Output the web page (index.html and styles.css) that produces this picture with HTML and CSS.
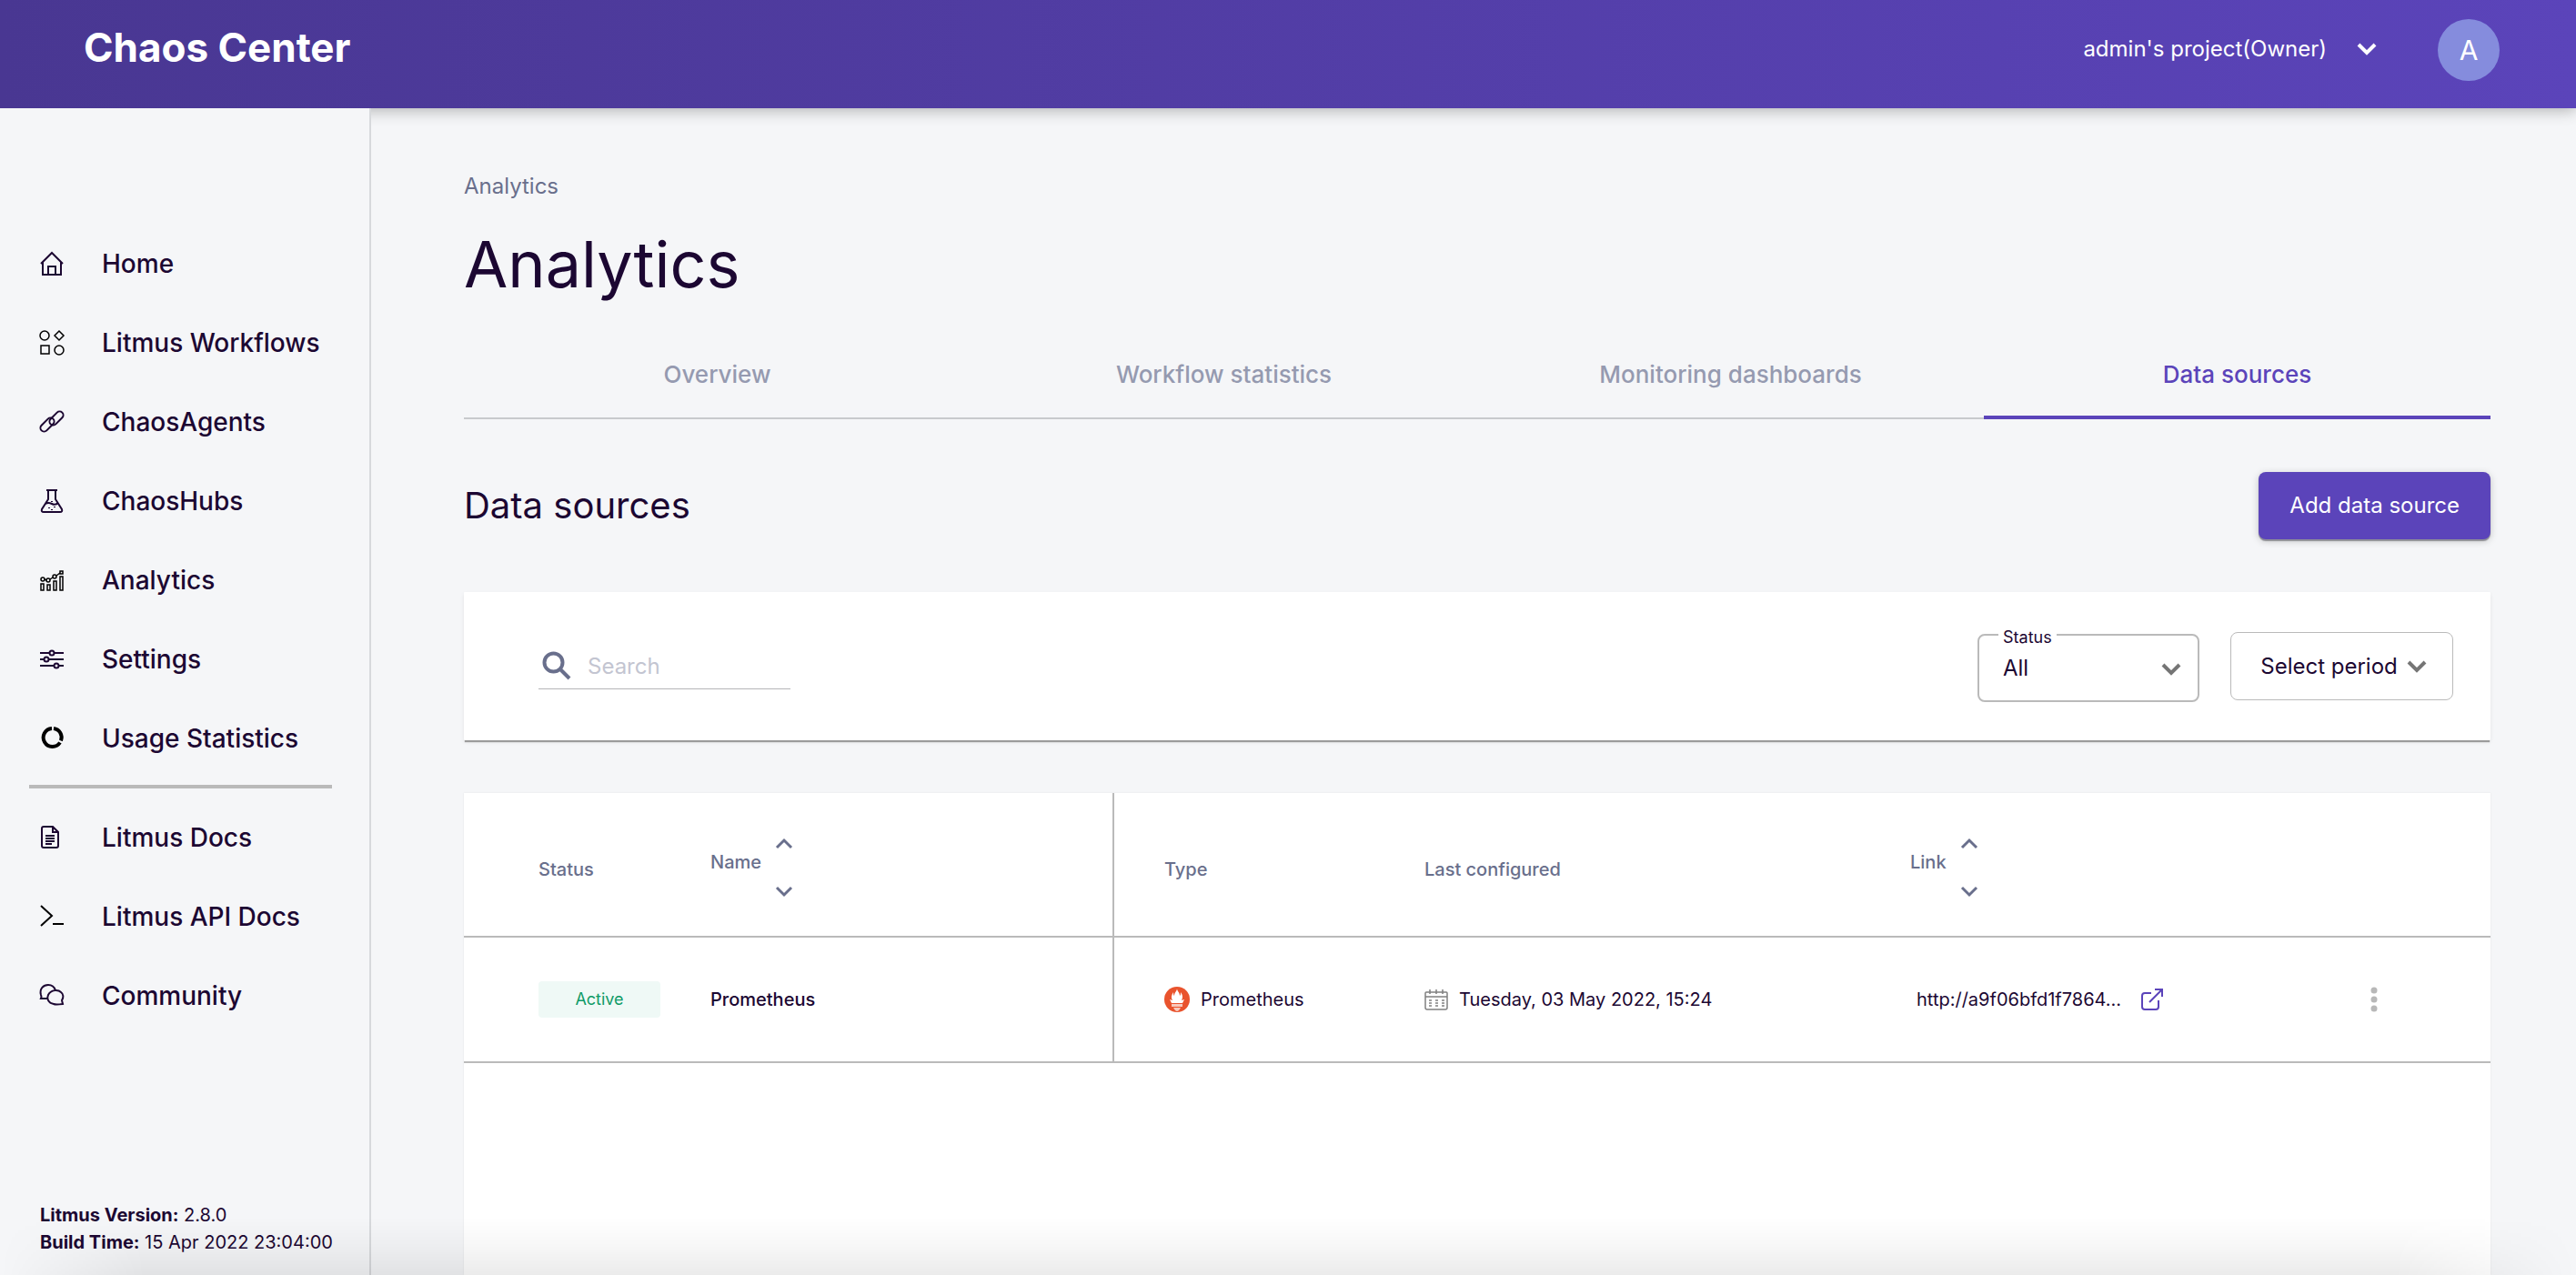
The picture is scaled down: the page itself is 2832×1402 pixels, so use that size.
FILE: index.html
```html
<!DOCTYPE html>
<html lang="en">
<head>
  <meta charset="utf-8">
  <title>Chaos Center - Analytics</title>
  <link rel="stylesheet" href="styles.css">
</head>
<body>
  <header class="topbar">
    <a class="brand" href="#">Chaos Center</a>
    <div class="account">
      <button class="project" type="button">
        <span>admin's project(Owner)</span>
        <svg class="chevron-light" viewBox="0 0 20 12" width="20" height="12"><path d="M1 1l9 9 9-9"/></svg>
      </button>
      <button class="avatar" type="button">A</button>
    </div>
  </header>

  <div class="shell">
    <aside class="sidebar">
      <nav>
        <ul class="menu">
          <li><a href="#">
            <svg class="icon" viewBox="0 0 26 26"><path d="M1 13L13 1l12 12M3 11v14h20V11M9 25v-9h8v9"/></svg>
            <span>Home</span></a></li>
          <li><a href="#">
            <svg class="icon icon-black" viewBox="0 0 26 26"><circle cx="5" cy="5" r="5"/><path d="M21 0l5 5-5 5-5-5zM1 16h9v9H1z"/><circle cx="21" cy="21" r="5"/></svg>
            <span>Litmus Workflows</span></a></li>
          <li><a href="#">
            <svg class="icon" viewBox="0 0 26 26"><rect x="-9" y="-4" width="18" height="8" rx="4" transform="translate(8 16) rotate(-45)"/><rect x="-9" y="-4" width="18" height="8" rx="4" transform="translate(18 9) rotate(-45)"/></svg>
            <span>ChaosAgents</span></a></li>
          <li><a href="#">
            <svg class="icon" viewBox="0 0 26 26"><path d="M7 1h12M9 1v10L2 22q-1 3 2 3h18q3 0 2-3L17 11V1M6 16q3-2 7 0t7-1"/><path d="M13 13v1M10 20v1M16 19v1M13 22v1"/></svg>
            <span>ChaosHubs</span></a></li>
          <li><a href="#">
            <svg class="icon icon-black" viewBox="0 0 26 26"><path d="M1 17h3v7H1zM8 18h3v6H8zM15 14h3v10h-3zM22 9h3v15h-3zM5 12l2 1M11 12l3-2M18 8l4-3"/><circle cx="3" cy="12" r="2"/><circle cx="9" cy="13" r="2"/><circle cx="16" cy="9" r="2"/><path d="M22 3h3v3h-3z"/></svg>
            <span>Analytics</span></a></li>
          <li><a href="#">
            <svg class="icon" viewBox="0 0 26 26"><path d="M0 6h10.500M15.500 6H26M0 13h4.500M9.500 13H26M0 20h15.500M20.500 20H26"/><circle cx="13" cy="6" r="2.500"/><circle cx="7" cy="13" r="2.500"/><circle cx="18" cy="20" r="2.500"/></svg>
            <span>Settings</span></a></li>
          <li><a href="#">
            <svg class="icon icon-ring" viewBox="0 0 26 26"><path d="M15 2A10 10 0 0 1 23 15.500M22 17.500A10 10 0 1 1 13 2"/></svg>
            <span>Usage Statistics</span></a></li>
        </ul>
        <hr class="divider">
        <ul class="menu">
          <li><a href="#">
            <svg class="icon" viewBox="0 0 26 26"><path d="M4 1h10l6 6v15q0 2-2 2H4q-2 0-2-2V3q0-2 2-2zM14 1v6h6M6 11h10M6 14h10M6 17h10M6 20h7"/></svg>
            <span>Litmus Docs</span></a></li>
          <li><a href="#">
            <svg class="icon icon-prompt" viewBox="0 0 26 26"><path d="M1 1l12 11L1 23M14 21h12"/></svg>
            <span>Litmus API Docs</span></a></li>
          <li><a href="#">
            <svg class="icon" viewBox="0 0 26 26"><path d="M8 16H1q1-2 0-4C-1 5 4 1 9 1q6 0 8 6"/><path d="M25 22q-8 1-10 0C9 21 7 16 9 12c3-6 11-6 14-3 3 2 3 6 1 9z"/></svg>
            <span>Community</span></a></li>
        </ul>
      </nav>
      <p class="build"><b>Litmus Version:</b> 2.8.0<br><b>Build Time:</b> 15 Apr 2022 23:04:00</p>
    </aside>

    <main class="content">
      <a class="crumb" href="#">Analytics</a>
      <h1>Analytics</h1>
      <div class="tabs" role="tablist">
        <button type="button" role="tab">Overview</button>
        <button type="button" role="tab">Workflow statistics</button>
        <button type="button" role="tab">Monitoring dashboards</button>
        <button class="active" type="button" role="tab" aria-selected="true">Data sources</button>
      </div>
      <div class="section-head">
        <h2>Data sources</h2>
        <button class="primary" type="button">Add data source</button>
      </div>

      <div class="filters">
        <label class="search">
          <svg viewBox="0 0 32 32" width="32" height="32"><path d="M20 20l10 10"/><circle cx="12.500" cy="12.500" r="10"/></svg>
          <input type="search" placeholder="Search" aria-label="Search">
        </label>
        <div class="status-field">
          <label for="status">Status</label>
          <select id="status"><option>All</option></select>
          <svg class="chevron-grey" viewBox="0 0 22 14" width="22" height="14"><path d="M2 2l9 9 9-9"/></svg>
        </div>
        <button class="period" type="button">
          <span>Select period</span>
          <svg class="chevron-grey" viewBox="0 0 22 14" width="22" height="14"><path d="M2 2l9 9 9-9"/></svg>
        </button>
      </div>

      <div class="panel">
        <table class="sources">
          <colgroup><col class="col-status"><col class="col-name"><col class="col-type"><col class="col-date"><col class="col-link"><col></colgroup>
          <thead>
            <tr>
              <th class="first">Status</th>
              <th class="split"><div class="sortable"><span>Name</span>
                <div class="arrows">
                  <button type="button" aria-label="Sort names ascending"><svg viewBox="0 0 18 12" width="18" height="12"><path d="M1 10l8-8 8 8"/></svg></button>
                  <button type="button" aria-label="Sort names descending"><svg viewBox="0 0 18 12" width="18" height="12"><path d="M1 1l8 8 8-8"/></svg></button>
                </div></div></th>
              <th class="after-split">Type</th>
              <th>Last configured</th>
              <th><div class="sortable"><span>Link</span>
                <div class="arrows">
                  <button type="button" aria-label="Sort links ascending"><svg viewBox="0 0 18 12" width="18" height="12"><path d="M1 10l8-8 8 8"/></svg></button>
                  <button type="button" aria-label="Sort links descending"><svg viewBox="0 0 18 12" width="18" height="12"><path d="M1 1l8 8 8-8"/></svg></button>
                </div></div></th>
              <th></th>
            </tr>
          </thead>
          <tbody>
            <tr>
              <td class="first"><span class="badge">Active</span></td>
              <td class="split strong">Prometheus</td>
              <td class="after-split"><div class="with-icon">
                <svg viewBox="0 0 28 28" width="28" height="28"><circle cx="14" cy="14" r="14" fill="#e9532d"/><path fill="#fff" d="M14 2c0 3 3 4 3 8 1-1 1-2 1-4 3 4 2 7 1 9l3-1-2 4H8l-2-4 3 1c-2-3-1-6 1-9 0 2 0 3 1 4 0-4 3-5 3-8z"/><path fill="#f8c9bc" d="M8 19h12v3H8zM10 23h8q-2 4-4 4t-4-4z"/></svg>
                <span>Prometheus</span></div></td>
              <td><div class="with-icon">
                <svg class="calendar" viewBox="0 0 26 24" width="26" height="24"><path d="M2 4h22q1 0 1 1v16q0 2-2 2H3q-2 0-2-2V5q0-1 1-1zM1 9h24M6 1v5M13 1v5M20 1v5"/><path stroke-dasharray="3 4" d="M5 13h17M5 16h17M5 19h17"/></svg>
                <span>Tuesday, 03 May 2022, 15:24</span></div></td>
              <td><a class="source-link" href="#"><span>http://a9f06bfd1f7864...</span>
                <svg viewBox="0 0 24 24" width="24" height="24"><path d="M11 5H4Q1 5 1 8v12q0 3 3 3h12q3 0 3-3v-7M15 1h8v8M23 1L9 15"/></svg></a></td>
              <td><button class="more" type="button" aria-label="More actions"><svg viewBox="0 0 8 28" width="8" height="28"><circle cx="4" cy="4" r="3.500"/><circle cx="4" cy="14" r="3.500"/><circle cx="4" cy="24" r="3.500"/></svg></button></td>
            </tr>
          </tbody>
        </table>
      </div>
    </main>
  </div>
</body>
</html>
```
FILE: styles.css
```css
* { box-sizing: border-box; }

body {
  margin: 0;
  min-height: 100vh;
  display: flex;
  flex-direction: column;
  background: #f5f6f8;
  color: #1c0732;
  font-family: Inter, "Liberation Sans", sans-serif;
  font-size: 20px;
}

/* soft shade along the bottom edge of the window */
body::after {
  content: "";
  position: fixed;
  left: 0;
  right: 0;
  bottom: 0;
  height: 64px;
  z-index: 5;
  pointer-events: none;
  background: linear-gradient(to bottom, transparent, rgba(0, 0, 0, 0.03) 50%, rgba(0, 0, 0, 0.08));
  -webkit-mask-image: linear-gradient(to right, transparent, #000 160px, #000 calc(100% - 200px), transparent);
  mask-image: linear-gradient(to right, transparent, #000 160px, #000 calc(100% - 200px), transparent);
}

button, input, select { font: inherit; color: inherit; }
button { background: none; border: 0; padding: 0; cursor: pointer; }
a { color: inherit; text-decoration: none; }
svg { display: block; flex: none; fill: none; overflow: visible; }

.topbar {
  position: relative;
  z-index: 1;
  display: flex;
  justify-content: space-between;
  height: 119px;
  padding: 0 84px 0 92px;
  background: linear-gradient(to right, #493792, #5b44ba);
  box-shadow: 0 2px 16px rgba(0, 0, 0, 0.3);
  color: #fff;
}
.brand { padding-top: 24px; font-size: 44px; line-height: 56px; font-weight: 700; }
.account { display: flex; align-items: flex-start; gap: 68px; padding-top: 21px; }
.project { display: flex; align-items: center; gap: 34px; height: 68px; font-size: 24px; line-height: 32px; padding-bottom: 2px; }
.chevron-light { stroke: #fff; stroke-width: 4; }
.avatar { width: 68px; height: 68px; border-radius: 50%; background: #858cdd; font-size: 30px; }

.shell { flex: 1; display: flex; }

.sidebar {
  position: relative;
  z-index: 2;
  flex: none;
  display: flex;
  flex-direction: column;
  justify-content: space-between;
  width: 408px;
  padding: 127px 0 21px;
  border-right: 2px solid #d7d9dc;
  background: #f5f6f8;
}
.menu { list-style: none; margin: 0; padding: 0; }
.menu a { display: flex; align-items: center; gap: 42px; height: 87px; padding-left: 44px; font-size: 28px; line-height: 36px; font-weight: 500; }
.icon { width: 26px; height: 26px; stroke: #1c0732; stroke-width: 2; }
.icon-black { stroke: #000; stroke-width: 1.500; }
.icon-ring { stroke: #000; stroke-width: 4; }
.icon-prompt { stroke: #000; }
.divider { height: 4px; margin: 8px 41px 10px 32px; border: 0; background: #bababa; }
.build { margin: 0; padding-left: 44px; font-size: 20px; line-height: 30px; }

.content { flex: 1; min-width: 0; display: flex; flex-direction: column; padding: 69px 94px 0 102px; }
.crumb { align-self: flex-start; font-size: 24px; line-height: 34px; color: #696f8c; }
h1 { margin: 24px 0 0; font-size: 70px; line-height: 90px; font-weight: 400; }

.tabs { display: grid; grid-template-columns: repeat(4, 1fr); margin-top: 27px; height: 98px; box-shadow: inset 0 -2px #c8cacd; }
.tabs button { padding-bottom: 2px; font-size: 26px; font-weight: 500; color: #959ab0; }
.tabs .active { color: #5b44ba; box-shadow: inset 0 -4px #5b44ba; }

.section-head { display: flex; align-items: center; justify-content: space-between; margin-top: 58px; }
h2 { margin: 0; font-size: 40px; line-height: 50px; font-weight: 400; }
.primary { height: 74px; padding: 0 34px 2px; border-radius: 8px; background: #5b44ba; color: #fff; font-size: 24px; box-shadow: 0 2px 1px #8e8e96, 0 2px 8px rgba(0, 0, 0, 0.2); }

.filters { display: flex; align-items: center; margin-top: 58px; height: 163px; padding: 0 41px 0 82px; background: #fff; box-shadow: 0 3px 1px -1px #9b9b9b, 0 2px 4px rgba(0, 0, 0, 0.08); border-radius: 1px; }
.search { display: flex; align-items: center; gap: 18px; width: 277px; height: 50px; padding-left: 4px; border-bottom: 1px solid #b5b5b8; }
.search svg { stroke: #696f8c; stroke-width: 4; }
.search input { flex: 1; min-width: 0; padding: 0; border: 0; outline: 0; background: none; font-size: 24px; }
.search input::placeholder { color: #c3c5d1; opacity: 1; }
.status-field { position: relative; margin: 3px 34px 0 auto; width: 244px; height: 75px; border: 2px solid #bababa; border-radius: 8px; }
.status-field label { position: absolute; top: -9px; left: 21px; padding: 0 5px; background: #fff; font-size: 18px; line-height: 22px; }
.status-field select { width: 100%; height: 100%; padding: 2px 26px; border: 0; background: none; appearance: none; font-size: 24px; }
.status-field svg { position: absolute; right: 18px; top: 30px; pointer-events: none; }
.chevron-grey { stroke: #757575; stroke-width: 4; }
.period { display: flex; align-items: center; justify-content: center; gap: 10px; width: 245px; height: 75px; padding-left: 4px; border: 1px solid #bababa; border-radius: 8px; font-size: 24px; }

.panel { flex: 1; margin-top: 58px; background: #fff; box-shadow: 0 0 2px rgba(0, 0, 0, 0.08); }
.sources { width: 100%; table-layout: fixed; border-collapse: separate; border-spacing: 0; }
.col-status { width: 239px; }
.col-name { width: 476px; }
.col-type { width: 309px; }
.col-date { width: 534px; }
.col-link { width: 500px; }
th, td { padding: 0 0 0 32px; border-bottom: 2px solid #bababa; text-align: left; white-space: nowrap; }
th { height: 159px; padding-top: 10px; font-weight: 500; color: #696f8c; }
td { height: 138px; }
.first { padding-left: 82px; }
.split { border-right: 2px solid #bababa; }
.after-split { padding-left: 55px; }
.strong { font-weight: 500; }
.sortable { display: flex; align-items: center; gap: 16px; padding-bottom: 2px; }
.sortable span { padding-bottom: 14px; }
.arrows { display: flex; flex-direction: column; gap: 41px; }
.arrows svg { stroke: #696f8c; stroke-width: 3; }
.badge { display: block; width: 134px; padding: 9px 0; border-radius: 4px; background: #eff9f6; color: #109b67; font-size: 18px; line-height: 22px; text-align: center; }
.with-icon { display: flex; align-items: center; gap: 12px; }
.calendar { stroke: #808080; stroke-width: 1.500; }
.source-link { display: flex; align-items: center; gap: 22px; padding-left: 7px; }
.source-link svg { stroke: #5b44ba; stroke-width: 2; }
.more { display: block; margin-left: 6px; }
.more svg { fill: #b8b8b8; }
```
